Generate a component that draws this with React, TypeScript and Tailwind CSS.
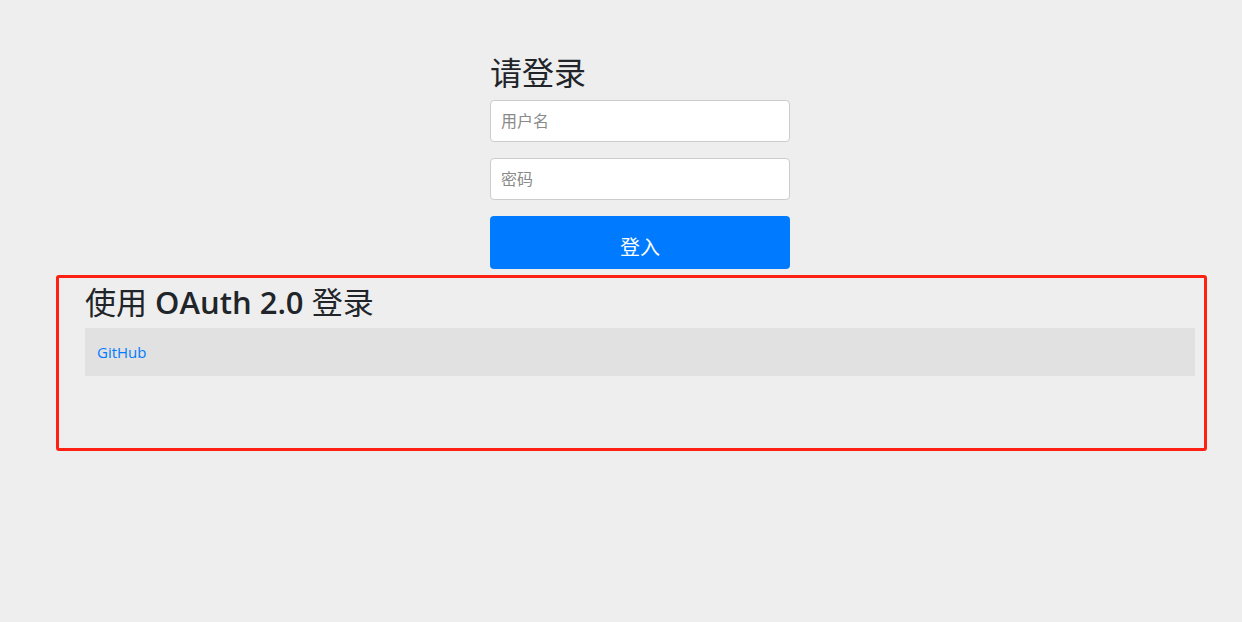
import { FC } from 'react';

const App: FC = () => {
  return (
    <div className="min-h-screen w-full bg-[#eeeeee] text-[#212529] font-['Open_Sans','Noto_Sans_CJK_SC',sans-serif]">
      {/* Sign in form */}
      <form className="ml-[490px] w-[300px] pt-[54px] flex flex-col" onSubmit={(e) => e.preventDefault()}>
        <h1 className="text-[32px] leading-[38px] font-normal mb-[8px]">请登录</h1>
        <input
          type="text"
          placeholder="用户名"
          className="h-[42px] w-full rounded-[4px] border border-[#cccccc] bg-white px-[10px] text-[16px] placeholder:text-[#8a8a8a] outline-none"
        />
        <input
          type="password"
          placeholder="密码"
          className="mt-[16px] h-[42px] w-full rounded-[4px] border border-[#cccccc] bg-white px-[10px] text-[16px] placeholder:text-[#8a8a8a] outline-none"
        />
        <button
          type="submit"
          className="mt-[16px] h-[53px] w-full rounded-[4px] bg-[#007bff] pt-[10px] text-[20px] text-white"
        >
          登入
        </button>
      </form>

      {/* OAuth 2.0 */}
      <div className="ml-[56px] mt-[6px] h-[176px] w-[1151px] rounded-[3px] border-[3px] border-[#fe2012] pl-[26px] pr-[9px] pt-[5px]">
        <h2 className="mb-[7px] text-[31px] leading-[38px] font-normal">
          使用 <span className="font-semibold">OAuth 2.0</span> 登录
        </h2>
        <div className="flex h-[48px] items-center bg-[#e1e1e1] px-[12px]">
          <a href="#" className="text-[15px] text-[#007bff]">
            GitHub
          </a>
        </div>
      </div>
    </div>
  );
};

export default App;
